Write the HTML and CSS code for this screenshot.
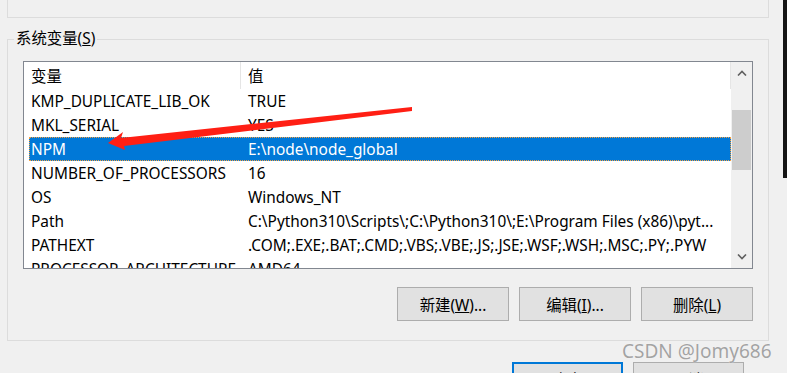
FILE: index.html
```html
<!DOCTYPE html>
<html lang="zh-CN">
  <head>
    <meta charset="UTF-8" />
    <title>环境变量</title>
    <link rel="stylesheet" href="styles.css">
  </head>
  <body>
    <div class="screen">
      <div class="dialog">
        <div class="user-box"></div>
        <fieldset class="sys-group">
          <legend>系统变量(<u>S</u>)</legend>
          <div class="listview">
            <div class="list-body">
              <div class="list-head">
                <div class="col name">变量</div>
                <div class="col value">值</div>
              </div>
              <div class="row">
                <div class="col name">KMP_DUPLICATE_LIB_OK</div>
                <div class="col value">TRUE</div>
              </div>
              <div class="row">
                <div class="col name">MKL_SERIAL</div>
                <div class="col value">YES</div>
              </div>
              <div class="row selected">
                <div class="col name">NPM</div>
                <div class="col value">E:\node\node_global</div>
              </div>
              <div class="row">
                <div class="col name">NUMBER_OF_PROCESSORS</div>
                <div class="col value">16</div>
              </div>
              <div class="row">
                <div class="col name">OS</div>
                <div class="col value">Windows_NT</div>
              </div>
              <div class="row">
                <div class="col name">Path</div>
                <div class="col value">C:\Python310\Scripts\;C:\Python310\;E:\Program Files (x86)\pyt...</div>
              </div>
              <div class="row">
                <div class="col name">PATHEXT</div>
                <div class="col value">.COM;.EXE;.BAT;.CMD;.VBS;.VBE;.JS;.JSE;.WSF;.WSH;.MSC;.PY;.PYW</div>
              </div>
              <div class="row">
                <div class="col name">PROCESSOR_ARCHITECTURE</div>
                <div class="col value">AMD64</div>
              </div>
            </div>
            <div class="scrollbar">
              <div class="sb-btn">
                <svg width="10" height="6" viewBox="0 0 10 6"><polyline points="1,5.5 5,1.5 9,5.5" fill="none" stroke="#606060" stroke-width="1.6"/></svg>
              </div>
              <div class="sb-track"><div class="sb-thumb"></div></div>
              <div class="sb-btn">
                <svg width="10" height="6" viewBox="0 0 10 6"><polyline points="1,0.5 5,4.5 9,0.5" fill="none" stroke="#606060" stroke-width="1.6"/></svg>
              </div>
            </div>
          </div>
          <div class="btn-row">
            <button class="btn">新建(<u>W</u>)...</button>
            <button class="btn">编辑(<u>I</u>)...</button>
            <button class="btn">删除(<u>L</u>)</button>
          </div>
        </fieldset>
        <div class="dialog-actions">
          <button class="btn default">确定</button>
          <button class="btn">取消</button>
        </div>
      </div>
      <div class="backdrop"></div>
    </div>

    <!-- annotation drawn over the screenshot -->
    <svg class="arrow" width="787" height="373" viewBox="0 0 787 373">
      <polygon points="108,143 123,132 121,138 412,107 412,111 124,146 125,150" fill="#ff1f14"/>
    </svg>
    <div class="watermark">CSDN @Jomy686</div>
  </body>
</html>
```

FILE: styles.css
```css
body {
    margin: 0;
    background-color: #F0F0F0;
    font-family: "Noto Sans", "Noto Sans CJK SC", sans-serif;
    font-size: 15.4px;
    color: #000;
    width: 787px;
    height: 373px;
    overflow: hidden;
    position: relative;
}
.screen {
    display: flex;
    align-items: flex-start;
}
.dialog {
    width: 783px;
}
.backdrop {
    width: 4px;
    height: 178px;
    background-color: #151515;
}
.user-box {
    box-sizing: border-box;
    margin-left: 7px;
    width: 762px;
    height: 18px;
    border: 1px solid #DCDCDC;
    border-top: none;
}
.sys-group {
    box-sizing: border-box;
    margin: 11px 0 0 7px;
    width: 762px;
    padding: 0 6px 19px 6px;
    border: 1px solid #DCDCDC;
}
.sys-group legend {
    padding: 0 2px;
    line-height: 20px;
}
.listview {
    display: flex;
    box-sizing: border-box;
    margin: 12px 0 0 9px;
    width: 730px;
    height: 208px;
    border: 1px solid #828790;
    background-color: #fff;
}
.list-body {
    flex: 1;
    overflow: hidden;
    padding-left: 5px;
}
.list-head,
.row {
    display: flex;
    white-space: nowrap;
}
.list-head {
    height: 27px;
    border-right: 1px solid #E5E5E5;
}
.row {
    height: 24px;
}
.col {
    overflow: hidden;
    box-sizing: border-box;
}
.row .col {
    padding-top: 2px;
    line-height: 22px;
}
.col.name {
    width: 212px;
    padding-left: 2px;
}
.col.value {
    flex: 1;
    padding-left: 7px;
}
.list-head .col {
    padding-top: 2px;
    line-height: 25px;
}
.list-head .col.name {
    border-right: 1px solid #E5E5E5;
}
.row.selected {
    background-color: #0078D7;
    color: #fff;
    outline: 1px dotted #F5A040;
    outline-offset: -1px;
}
.scrollbar {
    width: 21px;
    display: flex;
    flex-direction: column;
    background-color: #F0F0F0;
}
.sb-btn {
    height: 22px;
    display: flex;
    align-items: center;
    justify-content: center;
}
.sb-track {
    flex: 1;
    padding: 26px 1px 0 1px;
}
.sb-thumb {
    height: 60px;
    background-color: #CDCDCD;
}
.btn-row {
    display: flex;
    justify-content: flex-end;
    gap: 10px;
    margin: 18px 0 0 9px;
    width: 730px;
}
.btn {
    box-sizing: border-box;
    width: 112px;
    height: 34px;
    background-color: #E1E1E1;
    border: 1px solid #ADADAD;
    font-family: inherit;
    font-size: 15.4px;
    color: #000;
    padding: 0;
}
.btn u {
    text-decoration-thickness: 1px;
}
.dialog-actions {
    display: flex;
    justify-content: flex-end;
    gap: 10px;
    margin-top: 21px;
    padding-right: 39px;
}
.dialog-actions .btn {
    width: 111px;
}
.btn.default {
    border: 2px solid #0078D7;
}
.arrow {
    position: absolute;
    left: 0;
    top: 0;
    pointer-events: none;
}
.watermark {
    position: absolute;
    left: 622px;
    top: 339px;
    font-size: 19px;
    line-height: 24px;
    color: #A3A3A3;
    text-shadow: 0 0 1px #fff;
    white-space: nowrap;
}
```
